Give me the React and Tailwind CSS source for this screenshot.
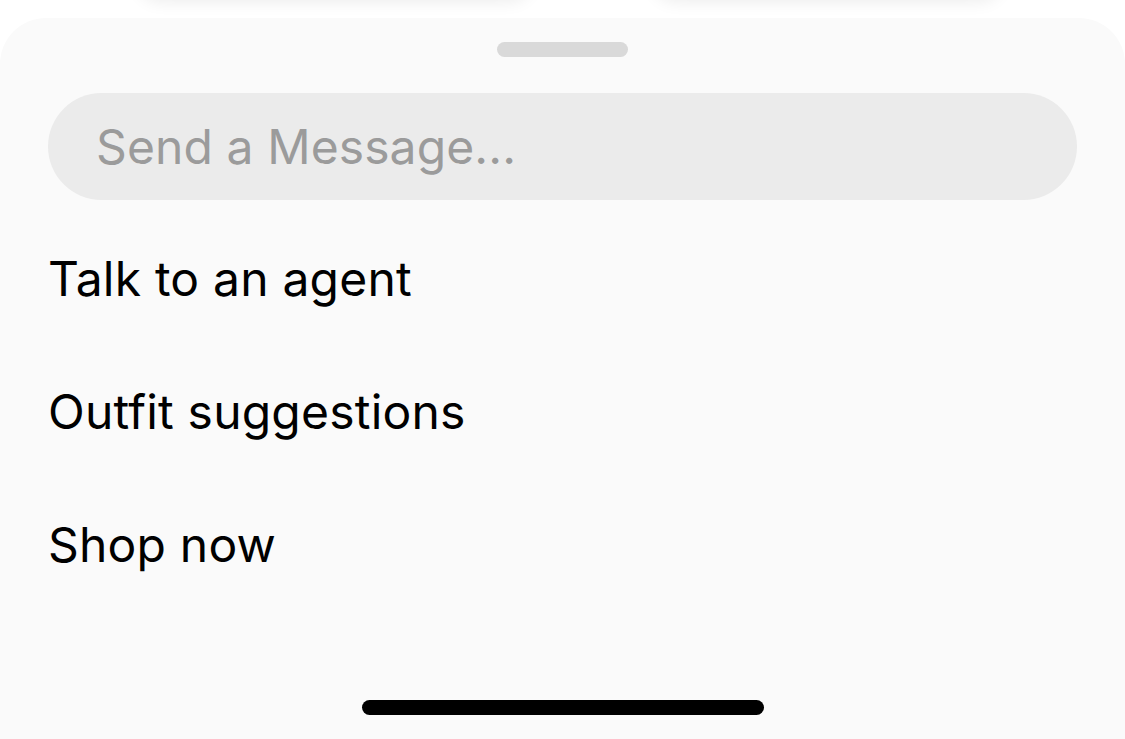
export default function App() {
  const font = { fontFamily: "Inter, 'Noto Sans', 'Liberation Sans', sans-serif" };
  return (
    <div className="w-[1125px] h-[739px] bg-white overflow-hidden flex flex-col" style={font}>
      <div className="h-[18px] shrink-0 flex">
        <div className="ml-[140px] w-[390px] h-[40px] -mt-[44px] rounded-[24px] bg-white shadow-[0_4px_18px_rgba(0,0,0,0.09)]" />
        <div className="ml-[125px] w-[345px] h-[40px] -mt-[44px] rounded-[24px] bg-white shadow-[0_4px_18px_rgba(0,0,0,0.09)]" />
      </div>
      <div className="flex-1 rounded-t-[46px] bg-[#fafafa] flex flex-col items-center">
        <div className="mt-[24px] w-[131px] h-[15px] rounded-full bg-[#d9d9d9]" />
        <div className="mt-[36px] self-stretch mx-[48px] h-[107px] rounded-full bg-[#ebebeb] flex items-center pl-[48px]">
          <span className="text-[48px] leading-[58px] text-[#9b9b9b] tracking-[0.1px]">Send a Message...</span>
        </div>
        <div className="self-stretch pl-[48px] mt-[50px] flex flex-col gap-[75px]">
          <div className="text-[48px] leading-[58px] text-black tracking-[0.2px]">Talk to an agent</div>
          <div className="text-[48px] leading-[58px] text-black tracking-[0.2px]">Outfit suggestions</div>
          <div className="text-[48px] leading-[58px] text-black tracking-[0.2px]">Shop now</div>
        </div>
        <div className="mt-auto mb-[24px] w-[402px] h-[15px] rounded-full bg-black" />
      </div>
    </div>
  );
}
